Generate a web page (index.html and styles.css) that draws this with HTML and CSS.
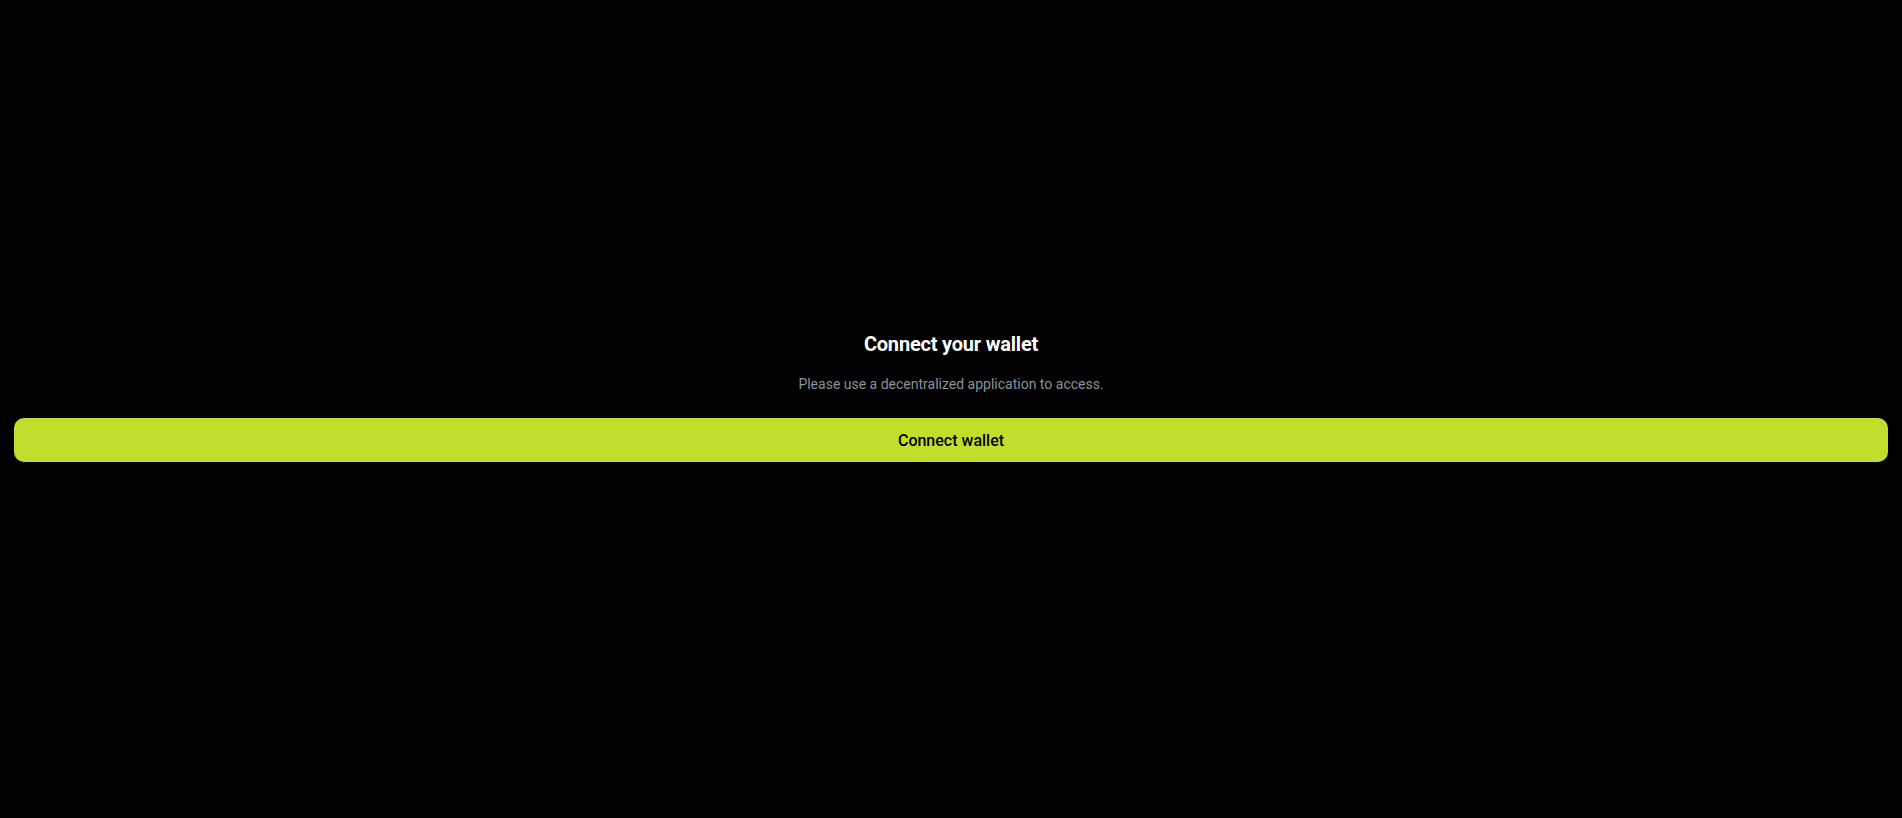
FILE: index.html
```html
<!DOCTYPE html>
<html>
<head>
<meta charset="utf-8">
<link rel="stylesheet" href="styles.css">
</head>
<body>
<main class="page">
  <h1 class="title">Connect your wallet</h1>
  <p class="subtitle">Please use a decentralized application to access.</p>
  <button class="connect">Connect wallet</button>
</main>
</body>
</html>
```
FILE: styles.css
```css
html, body {
  margin: 0;
  padding: 0;
  background: #000;
  height: 100%;
}
body {
  font-family: Roboto, "Liberation Sans", sans-serif;
}
.page {
  display: flex;
  flex-direction: column;
  align-items: center;
  padding: 332px 14px 0;
}
.title {
  margin: 0;
  font-size: 20px;
  line-height: 24px;
  font-weight: 700;
  color: #fff;
  letter-spacing: -0.2px;
}
.subtitle {
  margin: 18px 0 0;
  font-size: 14px;
  line-height: 20px;
  color: #8a929b;
}
.connect {
  margin-top: 24px;
  width: 100%;
  height: 44px;
  border: none;
  border-radius: 10px;
  background: #c2de2c;
  color: #000;
  font-family: Roboto, "Liberation Sans", sans-serif;
  font-size: 16px;
  font-weight: 500;
  cursor: pointer;
}
```
